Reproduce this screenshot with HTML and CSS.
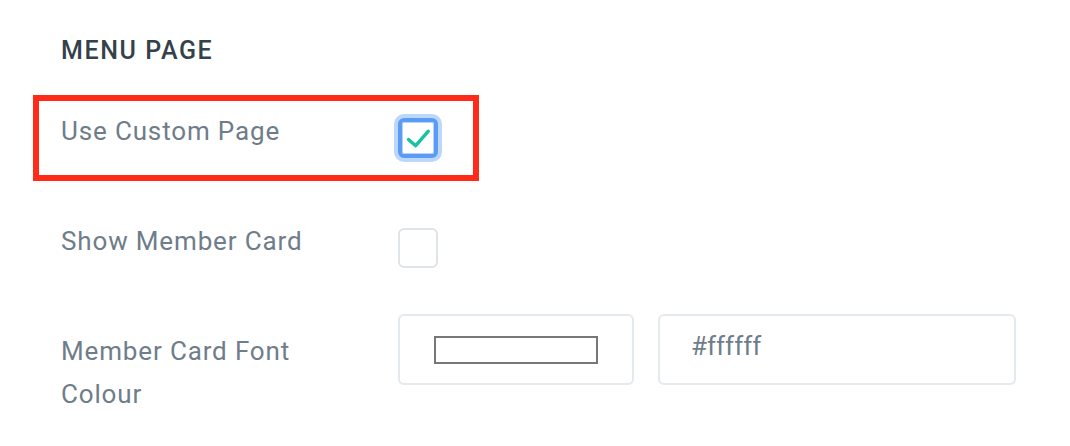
FILE: index.html
```html
<!DOCTYPE html>
<html>
<head>
   <meta charset="UTF-8">
   <title>Menu Page</title>
   <link rel="stylesheet" href="styles.css">
</head>
<body>

<div class="settings">
   <h2 class="settings-title">MENU PAGE</h2>

   <div class="form-row form-row-check highlighted">
       <label class="form-label">Use Custom Page</label>
       <span class="check checked">
           <svg viewBox="0 0 32 32" width="32" height="32">
               <path d="M6.5 17.5 L13.7 23.7 L26.3 9.2" fill="none" stroke="#17c1a2" stroke-width="3.4" stroke-linecap="round" stroke-linejoin="round"/>
           </svg>
       </span>
       <span class="highlight-box"></span>
   </div>

   <div class="form-row form-row-check">
       <label class="form-label">Show Member Card</label>
       <span class="check"></span>
   </div>

   <div class="form-row">
       <label class="form-label">Member Card Font Colour</label>
       <div class="color-picker">
           <span class="swatch"></span>
       </div>
       <div class="text-input">#ffffff</div>
   </div>
</div>

</body>
</html>
```

FILE: styles.css
```css
* {
    margin: 0;
    padding: 0;
    box-sizing: border-box;
}

body {
    background: #fff;
    font-family: Roboto, "Liberation Sans", Arial, sans-serif;
}

.settings {
    padding: 37px 0 0 61px;
}

.settings-title {
    font-size: 25px;
    font-weight: 500;
    line-height: 28px;
    letter-spacing: 1.6px;
    color: #33414b;
    margin-bottom: 29px;
}

.form-row {
    display: flex;
    align-items: flex-start;
    margin-bottom: 46px;
    position: relative;
}

.form-label {
    flex: 0 0 262px;
    margin-right: 75px;
    padding-top: 16px;
    font-size: 26px;
    line-height: 43px;
    letter-spacing: 0.85px;
    color: #6f7d8a;
}

.check {
    display: block;
    width: 40px;
    height: 40px;
    margin-top: 24px;
    border: 2px solid #dfe4e8;
    border-radius: 6px;
    background: #fff;
}

.check svg {
    display: block;
}

.check.checked {
    border: 4px solid #5a9cf5;
    box-shadow: 0 0 0 4px rgba(90, 156, 245, .4), inset 0 0 0 1px #b9d4fb;
}

/* red annotation frame */
.highlight-box {
    position: absolute;
    left: -28px;
    top: 1px;
    width: 446px;
    height: 86px;
    border: 6px solid #ff2a17;
    pointer-events: none;
}

.color-picker {
    width: 236px;
    height: 71px;
    border: 2px solid #e4e9ed;
    border-radius: 6px;
    display: flex;
    align-items: center;
    justify-content: center;
    margin-right: 24px;
}

.swatch {
    display: block;
    width: 164px;
    height: 28px;
    border: 2px solid #777;
    background: #fff;
}

.text-input {
    width: 358px;
    height: 71px;
    border: 2px solid #e4e9ed;
    border-radius: 6px;
    display: flex;
    align-items: center;
    padding: 0 0 8px 31px;
    font-size: 26px;
    color: #6f7d8a;
}
```
